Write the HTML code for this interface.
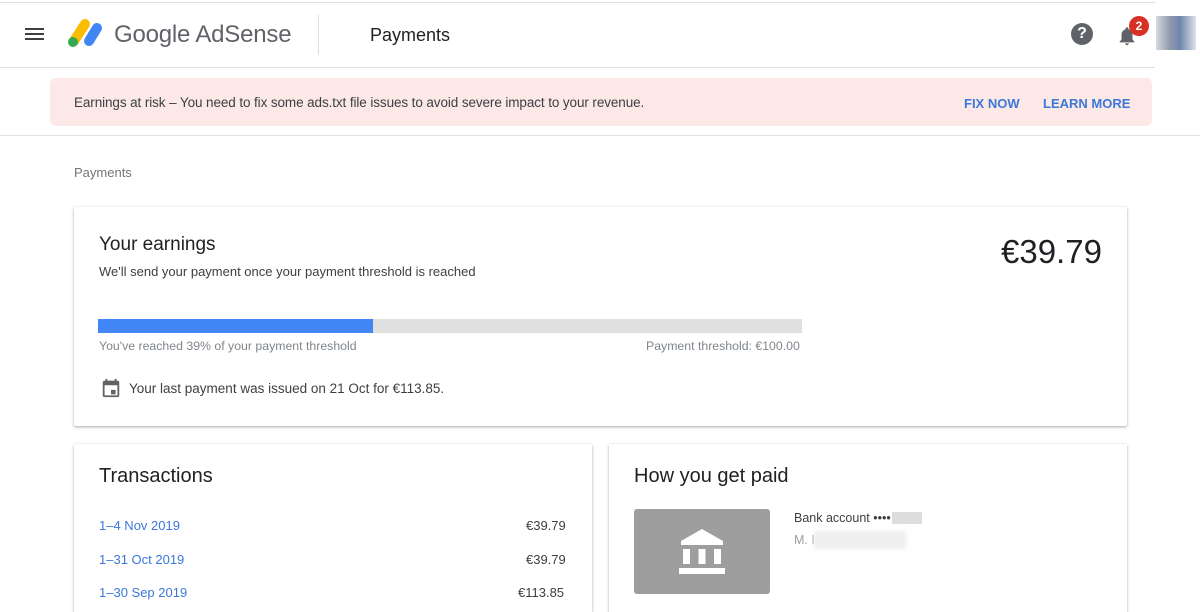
<!DOCTYPE html>
<html style="overflow:hidden;height:612px"><head><meta charset="utf-8"><style>
*{box-sizing:border-box;margin:0;padding:0}
body{width:1200px;height:612px;overflow:hidden;background:#fff;font-family:"Liberation Sans",Arial,sans-serif;position:relative;color:#202124}
.abs{position:absolute}
.card{position:absolute;background:#fff;box-shadow:0 1px 3px rgba(0,0,0,.25),0 1px 2px rgba(0,0,0,.12);border-radius:2px}
</style></head><body>
<div class="abs" style="left:0;top:2px;width:1155px;height:1px;background:#ddd"></div>
<div class="abs" style="left:0;top:67px;width:1155px;height:1px;background:#e0e0e0"></div>
<div class="abs" style="left:0;top:135px;width:1200px;height:1px;background:#e0e0e0"></div>
<div class="abs" style="left:25px;top:28px;width:19px;height:2px;background:#3c4043"></div>
<div class="abs" style="left:25px;top:33px;width:19px;height:2px;background:#3c4043"></div>
<div class="abs" style="left:25px;top:38px;width:19px;height:2px;background:#3c4043"></div>
<svg class="abs" style="left:66px;top:16px" width="38" height="34" viewBox="0 0 38 34">
<line x1="8" y1="25" x2="19" y2="8" stroke="#fbbc04" stroke-width="10" stroke-linecap="round"/>
<line x1="23" y1="25" x2="31" y2="12" stroke="#4285f4" stroke-width="10" stroke-linecap="round"/>
<circle cx="7" cy="26" r="5" fill="#34a853"/>
</svg>
<div class="abs" style="left:114px;top:21px;font-size:24px;color:#5f6368;letter-spacing:-0.2px">Google AdSense</div>
<div class="abs" style="left:318px;top:15px;width:1px;height:40px;background:#ddd"></div>
<div class="abs" style="left:370px;top:25px;font-size:18px;color:#202124">Payments</div>
<div class="abs" style="left:1071px;top:23px;width:22px;height:22px;border-radius:50%;background:#5f6368;color:#fff;font-weight:bold;font-size:16px;text-align:center;line-height:22px">?</div>
<svg class="abs" style="left:1116px;top:24px" width="22" height="24" viewBox="0 0 24 24"><path fill="#5f6368" d="M12 22c1.1 0 2-.9 2-2h-4c0 1.1.9 2 2 2zm6-6v-5c0-3.070-1.64-5.64-4.5-6.32V4c0-.83-.67-1.5-1.5-1.5s-1.5.67-1.5 1.5v.68C7.63 5.36 6 7.920 6 11v5l-2 2v1h16v-1l-2-2z"/></svg>
<div class="abs" style="left:1129px;top:16px;width:20px;height:20px;border-radius:50%;background:#d93025;color:#fff;font-size:12px;font-weight:bold;text-align:center;line-height:20px">2</div>
<div class="abs" style="left:1156px;top:16px;width:40px;height:34px;background:linear-gradient(90deg,#d6d9de,#8f9aab 35%,#6d86ad 60%,#dde2ea)"></div>
<div class="abs" style="left:50px;top:78px;width:1102px;height:48px;background:#fce8e6;border-radius:6px"></div>
<div class="abs" style="left:74px;top:95px;font-size:13.5px;color:#3c4043;letter-spacing:-0.1px">Earnings at risk – You need to fix some ads.txt file issues to avoid severe impact to your revenue.</div>
<div class="abs" style="left:964px;top:96px;font-size:13px;font-weight:bold;color:#3b78d8">FIX NOW</div>
<div class="abs" style="left:1043px;top:96px;font-size:13px;font-weight:bold;color:#3b78d8">LEARN MORE</div>
<div class="abs" style="left:74px;top:165px;font-size:13px;color:#757575">Payments</div>
<div class="card" style="left:74px;top:207px;width:1053px;height:219px"></div>
<div class="abs" style="left:99px;top:234px;font-size:19px;color:#202124">Your earnings</div>
<div class="abs" style="left:99px;top:264px;font-size:13px;color:#3c4043">We'll send your payment once your payment threshold is reached</div>
<div class="abs" style="left:1001px;top:233px;font-size:33px;color:#202124">€39.79</div>
<div class="abs" style="left:98px;top:319px;width:704px;height:14px;background:#e0e0e0"></div>
<div class="abs" style="left:98px;top:319px;width:275px;height:14px;background:#4285f4"></div>
<div class="abs" style="left:99px;top:339px;font-size:12.3px;color:#80868b">You've reached 39% of your payment threshold</div>
<div class="abs" style="left:646px;top:339px;font-size:12.3px;color:#80868b">Payment threshold: €100.00</div>
<svg class="abs" style="left:100px;top:377px" width="22" height="22" viewBox="0 0 24 24"><path fill="#5f6368" d="M19 4h-1V2h-2v2H8V2H6v2H5c-1.1 0-2 .9-2 2v14c0 1.1.9 2 2 2h14c1.1 0 2-.9 2-2V6c0-1.1-.9-2-2-2zm0 16H5V9h14v11zM12 14h5v5h-5z"/></svg>
<div class="abs" style="left:129px;top:381px;font-size:13.5px;color:#3c4043">Your last payment was issued on 21 Oct for €113.85.</div>
<div class="card" style="left:74px;top:444px;width:518px;height:168px;border-radius:2px 2px 0 0"></div>
<div class="abs" style="left:99px;top:465px;font-size:20px;color:#202124">Transactions</div>
<div class="abs" style="left:99px;top:518px;font-size:13px;color:#3b78d8">1–4 Nov 2019</div>
<div class="abs" style="left:526px;top:518px;font-size:13px;color:#3c4043">€39.79</div>
<div class="abs" style="left:99px;top:552px;font-size:13px;color:#3b78d8">1–31 Oct 2019</div>
<div class="abs" style="left:526px;top:552px;font-size:13px;color:#3c4043">€39.79</div>
<div class="abs" style="left:99px;top:585px;font-size:13px;color:#3b78d8">1–30 Sep 2019</div>
<div class="abs" style="left:518px;top:585px;font-size:13px;color:#3c4043">€113.85</div>
<div class="card" style="left:609px;top:444px;width:518px;height:168px;border-radius:2px 2px 0 0"></div>
<div class="abs" style="left:634px;top:465px;font-size:20px;color:#202124">How you get paid</div>
<div class="abs" style="left:634px;top:509px;width:136px;height:85px;background:#9e9e9e;border-radius:3px"></div>
<svg class="abs" style="left:679px;top:527px" width="46" height="50" viewBox="0 0 46 50"><path fill="#fff" d="M23 2 L44 14 V18 H2 V14 Z"/><rect x="4" y="22" width="7" height="15" fill="#fff"/><rect x="19.5" y="22" width="7" height="15" fill="#fff"/><rect x="35" y="22" width="7" height="15" fill="#fff"/><rect x="0" y="41" width="46" height="6" fill="#fff"/></svg>
<div class="abs" style="left:794px;top:511px;font-size:12.5px;color:#3c4043">Bank account ••••</div>
<div class="abs" style="left:892px;top:512px;width:30px;height:12px;background:#ddd"></div>
<div class="abs" style="left:794px;top:533px;font-size:12.5px;color:#9aa0a6">M. I</div>
<div class="abs" style="left:814px;top:531px;width:92px;height:18px;background:#eee;filter:blur(2px)"></div>
</body></html>
